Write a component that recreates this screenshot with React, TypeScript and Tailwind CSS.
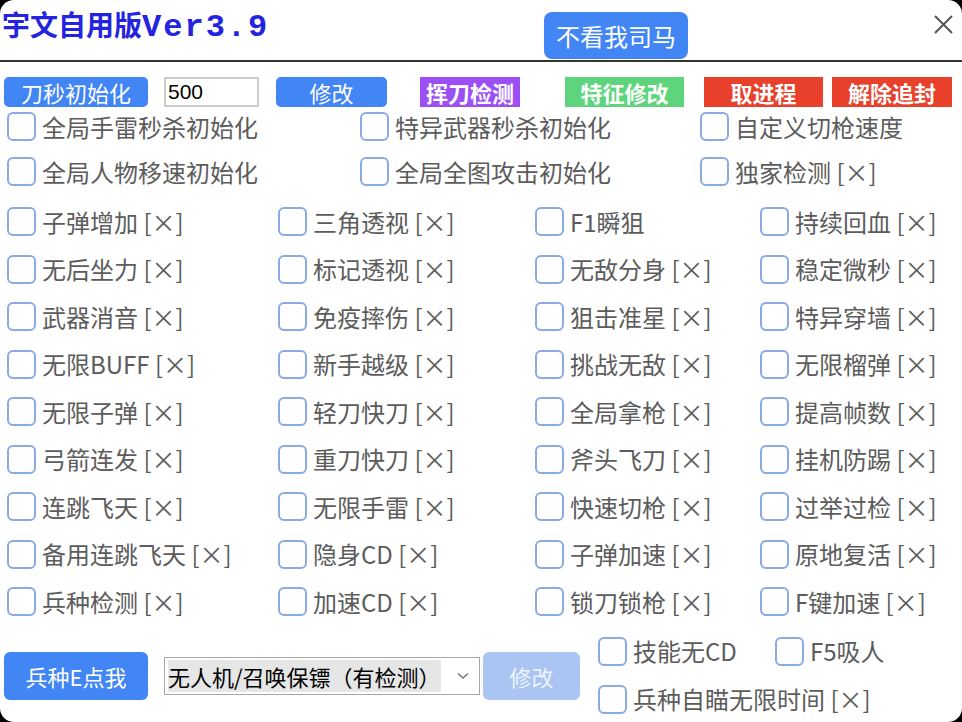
import React from 'react';

const topRows: string[][] = [
  ['全局手雷秒杀初始化', '特异武器秒杀初始化', '自定义切枪速度'],
  ['全局人物移速初始化', '全局全图攻击初始化', '独家检测 [×]'],
];

const options: string[][] = [
  ['子弹增加 [×]', '三角透视 [×]', 'F1瞬狙', '持续回血 [×]'],
  ['无后坐力 [×]', '标记透视 [×]', '无敌分身 [×]', '稳定微秒 [×]'],
  ['武器消音 [×]', '免疫摔伤 [×]', '狙击准星 [×]', '特异穿墙 [×]'],
  ['无限BUFF [×]', '新手越级 [×]', '挑战无敌 [×]', '无限榴弹 [×]'],
  ['无限子弹 [×]', '轻刀快刀 [×]', '全局拿枪 [×]', '提高帧数 [×]'],
  ['弓箭连发 [×]', '重刀快刀 [×]', '斧头飞刀 [×]', '挂机防踢 [×]'],
  ['连跳飞天 [×]', '无限手雷 [×]', '快速切枪 [×]', '过举过检 [×]'],
  ['备用连跳飞天 [×]', '隐身CD [×]', '子弹加速 [×]', '原地复活 [×]'],
  ['兵种检测 [×]', '加速CD [×]', '锁刀锁枪 [×]', 'F键加速 [×]'],
];

const Check: React.FC<{ label: string }> = ({ label }) => (
  <label className="flex items-center gap-[6px] cursor-pointer">
    <span className="w-[29px] h-[29px] shrink-0 rounded-[6px] border-2 border-[#8aa9e8] bg-white" />
    <span className="text-[24px] leading-none text-[#5c5c5c] whitespace-nowrap">{label}</span>
  </label>
);

export default function App() {
  return (
    <div className="w-[962px] h-[722px] bg-black font-['Noto_Sans_CJK_SC','Microsoft_YaHei',sans-serif]">
      <div className="w-full h-full rounded-[14px] bg-white overflow-hidden">
        {/* title bar */}
        <header className="grid grid-cols-[544px_144px_1fr] h-[62px] border-b-2 border-[#333]">
          <div className="pl-[2px] pt-[10px] flex items-baseline text-[#2323e0] font-bold">
            <span className="text-[28px] leading-none">宇文自用版</span>
            <span className="text-[32px] leading-none tracking-[2px] font-['Liberation_Mono',monospace]">Ver3.9</span>
          </div>
          <div className="pt-[12px]">
            <button className="w-[144px] h-[47px] rounded-[8px] bg-[#4285f4] text-white text-[24px] leading-none">
              不看我司马
            </button>
          </div>
          <div className="flex justify-end pr-[9px] pt-[15px]">
            <svg width="19" height="19" viewBox="0 0 19 19">
              <path d="M1 1L18 18M18 1L1 18" stroke="#555" strokeWidth="2" />
            </svg>
          </div>
        </header>

        {/* action buttons */}
        <div className="flex items-center h-[30px] mt-[15px] pl-[4px] text-[22px] leading-none text-white">
          <button className="w-[144px] h-[30px] rounded-[5px] bg-[#4285f4]">刀秒初始化</button>
          <input
            defaultValue="500"
            className="ml-[16px] w-[95px] h-[30px] px-[2px] border-2 border-[#ccc] text-black text-[21px] font-['Liberation_Sans',sans-serif] outline-none"
          />
          <button className="ml-[17px] w-[111px] h-[30px] rounded-[5px] bg-[#4285f4]">修改</button>
          <button className="ml-[33px] w-[100px] h-[30px] bg-[#9c4ff5] font-bold">挥刀检测</button>
          <button className="ml-[45px] w-[119px] h-[30px] bg-[#5ed57c] font-bold">特征修改</button>
          <button className="ml-[20px] w-[119px] h-[30px] bg-[#e9402b] font-bold">取进程</button>
          <button className="ml-[9px] w-[120px] h-[30px] bg-[#e9402b] font-bold">解除追封</button>
        </div>

        {/* initialisers */}
        <div className="mt-[5px] pl-[7px]">
          {topRows.map((row, i) => (
            <div key={i} className={`grid grid-cols-[353px_340px_1fr] items-start ${i === 0 ? 'h-[45px]' : 'h-[50px]'}`}>
              {row.map((l) => (
                <Check key={l} label={l} />
              ))}
            </div>
          ))}
        </div>

        {/* feature toggles */}
        <div className="grid grid-cols-[271px_257px_225px_1fr] auto-rows-[47.5px] items-start pl-[7px]">
          {options.flat().map((l) => (
            <Check key={l} label={l} />
          ))}
        </div>

        {/* class skill controls */}
        <div className="flex items-start pl-[4px]">
          <button className="mt-[17px] w-[144px] h-[48px] rounded-[6px] bg-[#4285f4] text-white text-[22px] leading-none">
            兵种E点我
          </button>
          <div className="ml-[16px] mt-[22px] w-[316px] h-[38px] border border-[#a8a8a8] bg-white flex items-center pl-[3px] pr-[10px]">
            <span className="bg-[#e6e6e6] text-black text-[22px] leading-[32px] whitespace-nowrap">无人机/召唤保镖（有检测）</span>
            <svg className="ml-auto" width="12" height="8" viewBox="0 0 12 8">
              <path d="M1 1.5L6 6L11 1.5" fill="none" stroke="#777" strokeWidth="1.6" />
            </svg>
          </div>
          <button className="ml-[3px] mt-[17px] w-[97px] h-[48px] rounded-[6px] bg-[#aac5f2] text-[#eef3fd] text-[22px] leading-none">
            修改
          </button>
          <div className="ml-[18px] mt-[2px]">
            <div className="flex h-[48px] items-start">
              <div className="w-[177px]">
                <Check label="技能无CD" />
              </div>
              <Check label="F5吸人" />
            </div>
            <Check label="兵种自瞄无限时间 [×]" />
          </div>
        </div>
      </div>
    </div>
  );
}
